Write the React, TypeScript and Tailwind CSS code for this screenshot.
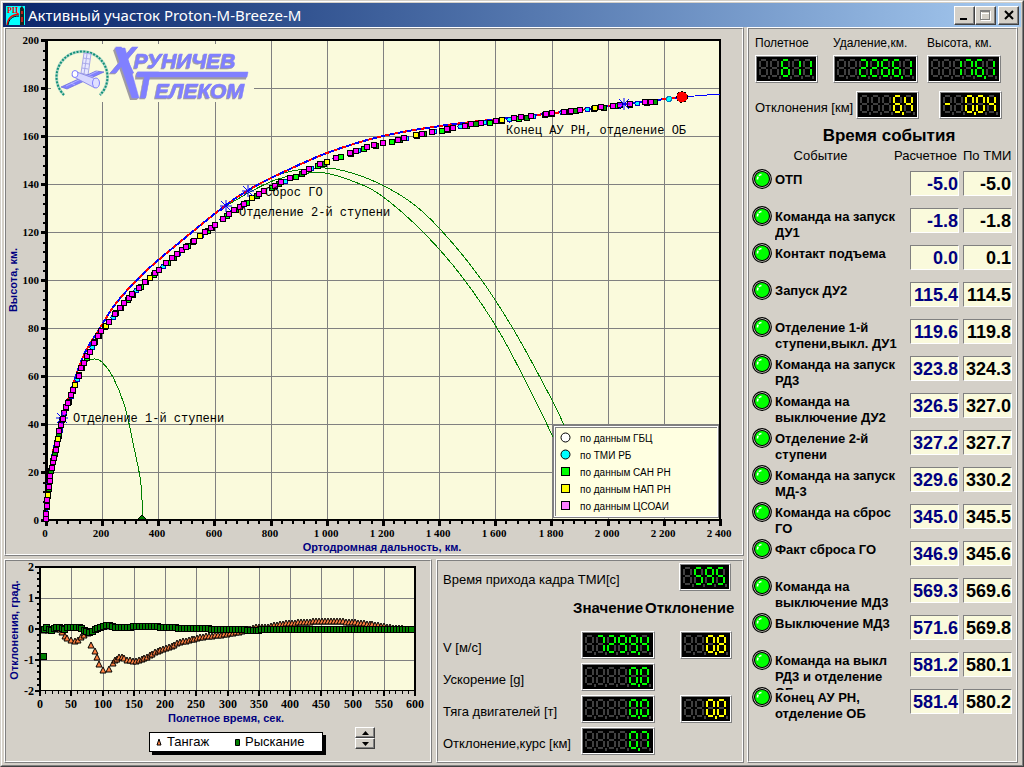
import type { ReactNode } from 'react'

type Point = [number, number]

interface FlightEvent {
  name: string
  planned: string
  actual: string
}

const EVENTS: FlightEvent[] = [
  { name: 'ОТП', planned: '-5.0', actual: '-5.0' },
  { name: 'Команда на запуск\nДУ1', planned: '-1.8', actual: '-1.8' },
  { name: 'Контакт подъема', planned: '0.0', actual: '0.1' },
  { name: 'Запуск ДУ2', planned: '115.4', actual: '114.5' },
  { name: 'Отделение 1-й\nступени,выкл. ДУ1', planned: '119.6', actual: '119.8' },
  { name: 'Команда на запуск\nРД3', planned: '323.8', actual: '324.3' },
  { name: 'Команда на\nвыключение ДУ2', planned: '326.5', actual: '327.0' },
  { name: 'Отделение 2-й\nступени', planned: '327.2', actual: '327.7' },
  { name: 'Команда на запуск\nМД-3', planned: '329.6', actual: '330.2' },
  { name: 'Команда на сброс\nГО', planned: '345.0', actual: '345.5' },
  { name: 'Факт сброса ГО', planned: '346.9', actual: '345.6' },
  { name: 'Команда на\nвыключение МД3', planned: '569.3', actual: '569.6' },
  { name: 'Выключение МД3', planned: '571.6', actual: '569.8' },
  { name: 'Команда на выкл\nРД3 и отделение\nОБ', planned: '581.2', actual: '580.1' },
  { name: 'Конец АУ РН,\nотделение ОБ', planned: '581.4', actual: '580.2' },
]

const PARAMS = [
  { label: 'V [м/с]', value: ' 7299,4', delta: '  0,8' },
  { label: 'Ускорение [g]', value: '    0,0', delta: '' },
  { label: 'Тяга двигателей [т]', value: '    0,0', delta: '  0,0' },
  { label: 'Отклонение,курс [км]', value: '    0,7', delta: '' },
]

/* ---------- seven segment display ---------- */

const SEGMENTS: Record<string, [number, number, number, number]> = {
  a: [2, 0, 5, 2],
  b: [7, 2, 2, 6],
  c: [7, 10, 2, 6],
  d: [2, 16, 5, 2],
  e: [0, 10, 2, 6],
  f: [0, 2, 2, 6],
  g: [2, 8, 5, 2],
}

const DIGITS: Record<string, string> = {
  '0': 'abcdef', '1': 'bc', '2': 'abged', '3': 'abgcd', '4': 'fgbc',
  '5': 'afgcd', '6': 'afgcde', '7': 'abc', '8': 'abcdefg', '9': 'abcdfg',
  '-': 'g', ' ': '',
}

function Display({ value, color = '#00ff00' }: { value: string; color?: string }) {
  const cells: { char: string; dot: boolean }[] = []
  for (const char of value) {
    if (char === ',') cells[cells.length - 1].dot = true
    else cells.push({ char, dot: false })
  }
  const width = cells.length * 11 + 4
  return (
    <div className="w-fit border border-t-white border-l-white border-r-[#808080] border-b-[#808080]">
      <div className="border border-t-[#808080] border-l-[#808080] border-r-white border-b-white bg-black">
        <svg role="img" aria-label={value.trim()} className="block" width={width} height={24} shapeRendering="crispEdges">
          {cells.map((cell, i) => (
            <g key={i} transform={`translate(${i * 11 + 2} 2)`}>
              {Object.entries(SEGMENTS).map(([name, [x, y, w, h]]) => (
                <rect key={name} x={x} y={y} width={w} height={h} fill={DIGITS[cell.char].includes(name) ? color : '#404040'} />
              ))}
              <rect x={9} y={17} width={2} height={3} fill={cell.dot ? color : '#404040'} />
            </g>
          ))}
        </svg>
      </div>
    </div>
  )
}

/* ---------- shared pieces ---------- */

function Panel({ className = '', children }: { className?: string; children: ReactNode }) {
  return (
    <div className="flex min-w-0 border border-t-white border-l-white border-r-[#808080] border-b-[#808080]">
      <div className={`min-w-0 flex-1 border border-t-[#808080] border-l-[#808080] border-r-white border-b-white ${className}`}>
        {children}
      </div>
    </div>
  )
}

function Lamp() {
  return (
    <svg className="block" width={20} height={20} viewBox="0 0 20 20">
      <circle cx={10} cy={10} r={9.3} fill="#d4d0c8" stroke="#000" strokeWidth={1.2} />
      <path d="M4 15a8 8 0 0 1 11-11.2" fill="none" stroke="#fff" strokeWidth={1.4} />
      <circle cx={10} cy={10} r={7.5} fill="#00ff00" stroke="#000" strokeWidth={1.1} />
      <path d="M5.500 10.500a4.600 4.600 0 0 1 4-5" fill="none" stroke="#fff" strokeWidth={1.6} strokeDasharray="3 1" />
    </svg>
  )
}

// walks along a polyline and returns points a given distance apart
function walk(points: Point[], step: (i: number) => number): Point[] {
  const out: Point[] = []
  let left = 0
  for (let i = 1; i < points.length; i++) {
    const [x0, y0] = points[i - 1]
    const [x1, y1] = points[i]
    const len = Math.hypot(x1 - x0, y1 - y0)
    while (left < len) {
      const t = left / len
      out.push([Math.round(x0 + (x1 - x0) * t), Math.round(y0 + (y1 - y0) * t)])
      left += step(out.length)
    }
    left -= len
  }
  return out
}

// smooth path through the given points
function smooth(points: Point[]) {
  let d = `M${points[0][0]} ${points[0][1]}`
  for (let i = 0; i < points.length - 1; i++) {
    const p0 = points[i - 1] ?? points[i]
    const p1 = points[i]
    const p2 = points[i + 1]
    const p3 = points[i + 2] ?? p2
    d += `C${p1[0] + (p2[0] - p0[0]) / 6} ${p1[1] + (p2[1] - p0[1]) / 6} ${p2[0] - (p3[0] - p1[0]) / 6} ${p2[1] - (p3[1] - p1[1]) / 6} ${p2[0]} ${p2[1]}`
  }
  return d
}

const range = (n: number) => Array.from({ length: n }, (_, i) => i)

/* ---------- trajectory chart ---------- */

const NOMINAL: Point[] = [
  [46, 520], [48, 500], [53, 452], [67, 403], [83, 357], [100, 328], [117, 302], [145, 272], [180, 242],
  [226, 205], [247, 191], [271, 178], [327, 153], [383, 136], [440, 126], [480, 121], [527, 116],
  [580, 110], [624, 104], [682, 97],
]

const MEASURED: Point[] = [
  [46, 519], [47, 500], [51, 471], [57, 443], [62, 419], [70, 398], [83, 364], [95, 342], [102, 330], [115, 314],
  [130, 296], [150, 278], [180, 251], [212, 227], [230, 213], [262, 192], [282, 182], [303, 172], [328, 161],
  [363, 148], [388, 142], [425, 133], [478, 123], [487, 122], [517, 118], [563, 112], [593, 108], [623, 105], [655, 101],
]

const STAGE1: Point[] = [
  [82, 366], [88, 361], [95, 359], [102, 362], [113, 377], [125, 407], [133, 443], [140, 477], [142, 500], [142, 518],
]

const STAGE2: Point[] = [
  [226, 206], [250, 192], [275, 180], [300, 174], [325, 173], [355, 182], [382, 196], [425, 234], [463, 278],
  [500, 333], [535, 400], [553, 437],
]

const FAIRING: Point[] = [
  [248, 191], [275, 176], [298, 170], [325, 168], [345, 171], [378, 183], [412, 203], [440, 229], [478, 275],
  [515, 332], [552, 400], [564, 425],
]

const CALLOUTS = [
  { star: [62, 418], text: 'Отделение 1-й ступени', x: 73, y: 422 },
  { star: [226, 206], text: 'Отделение 2-й ступени', x: 239, y: 216 },
  { star: [248, 191], text: 'Сброс ГО', x: 265, y: 196 },
  { star: [624, 104], text: 'Конец АУ РН, отделение ОБ', x: 506, y: 134 },
]

const SOURCES = [
  { name: 'по данным ГБЦ', color: '#ffffff', round: true },
  { name: 'по ТМИ РБ', color: '#00ffff', round: true },
  { name: 'по данным САН РН', color: '#00ff00', round: false },
  { name: 'по данным НАП РН', color: '#ffff00', round: false },
  { name: 'по данным ЦСОАИ', color: '#ff80ff', round: false },
]

function Logo() {
  return (
    <g>
      <rect x={51} y={44} width={203} height={58} fill="#fafadc" />
      <g shapeRendering="auto">
        <path d="M64 95A25.500 25.500 0 1 1 100 95" fill="none" stroke="#b0d8c8" strokeWidth={3} />
        <path d="M64 95A25.500 25.500 0 1 1 100 95" fill="none" stroke="#109078" strokeWidth={2} strokeDasharray="2 1.4" />
        {/* orbital station */}
        <path d="M84 53l7 1-3 21-7-2z" fill="#e8e8ff" stroke="#a8a8e8" />
        <path d="M83 58l7 1M82 63l7 1M82 68l6 1M87 54l-3 20" stroke="#a8a8e8" />
        <path d="M61 87l35-16 8 1-37 17z" fill="#8080ff" stroke="#6868d8" strokeWidth={0.7} />
        <path d="M66 86l32-15M71 83l4 2M89 76l4 1" stroke="#c8c8ff" strokeWidth={0.7} />
        <path d="M74 71l22 8-1 9-23-12z" fill="#d8d8ff" stroke="#9090e8" />
        <ellipse cx={75} cy={74} rx={3} ry={3.5} fill="#fff" stroke="#8080ff" />
        <ellipse cx={96} cy={83} rx={3.5} ry={5} fill="#e0e0ff" stroke="#8080ff" />
      </g>
      {/* grey shadow shapes under the lettering */}
      <g fill="#a09ca0" shapeRendering="auto">
        <path d="M113 50h10l14 50h-7z" />
        <path d="M136 73.500h111l-1 6h-111z" />
      </g>
      <g
        fill="#8080ff"
        stroke="#8080ff"
        strokeWidth={0.5}
        shapeRendering="auto"
        className="font-['Liberation_Sans'] font-bold italic [filter:drop-shadow(-1px_1px_0_#a09ca0)]"
      >
        <text x={112} y={73} fontSize={36}>Х</text>
        <path d="M115 48h10l14 50h-7z" />
        <text x={134} y={68} fontSize={21}>РУНИЧЕВ</text>
        <path d="M138 72h110l-1 5h-110z" />
        <text x={134} y={98} fontSize={36}>Т</text>
        <text x={155} y={98} fontSize={21}>ЕЛЕКОМ</text>
      </g>
    </g>
  )
}

function TrajectoryChart() {
  const gx = (i: number) => Math.round(46 + i * 56.17)
  const gy = (i: number) => 520 - i * 48
  const under = walk(MEASURED, i => (i < 50 ? 5 + (i % 3) : [8, 6, 12, 7, 10][i % 5]))
  const over = walk(MEASURED, i => (i < 22 ? [6, 5, 8][i % 3] : i < 60 ? [6, 7, 5, 10, 8][i % 5] : [6, 12, 7, 10, 15][i % 5]))
  return (
    <svg className="block w-full h-auto" viewBox="6 29 736 525" shapeRendering="crispEdges">
      <rect x={46} y={40} width={674} height={480} fill="#fafadc" />
      {range(11).map(i => <rect key={i} x={gx(i + 1)} y={40} width={1} height={480} fill="#808080" />)}
      {range(9).map(i => <rect key={i} x={46} y={gy(i + 1)} width={674} height={1} fill="#808080" />)}
      <Logo />

      {/* axes */}
      <rect x={45} y={39} width={676} height={2} fill="#000" />
      <rect x={719} y={40} width={2} height={480} fill="#000" />
      <rect x={45} y={40} width={3} height={481} fill="#000" />
      <rect x={45} y={519} width={676} height={2} fill="#000" />
      {range(51).map(i => (
        <rect key={i} x={i % 5 ? 43 : 41} y={Math.round(520 - i * 9.6) - (i % 5 ? 0 : 1)} width={i % 5 ? 3 : 7} height={i % 5 ? 2 : 3} fill="#000" />
      ))}
      {range(61).map(i => (
        <rect key={i} x={Math.round(46 + i * 11.23) - 1} y={i % 5 ? 521 : 519} width={i % 5 ? 2 : 3} height={i % 5 ? 3 : 7} fill="#000" />
      ))}
      <g className="font-['Liberation_Serif'] font-bold" fontSize={11}>
        {range(11).map(i => <text key={i} x={39} y={gy(i) + 4} textAnchor="end">{i * 20}</text>)}
        {range(13).map(i => (
          <text key={i} x={gx(i) - 1} y={537} textAnchor="middle">
            {i < 5 ? i * 200 : `${Math.floor(i / 5)} ${String((i * 200) % 1000).padStart(3, '0')}`}
          </text>
        ))}
      </g>
      <g className="font-['Liberation_Sans'] font-bold" fontSize={11} fill="#000080">
        <text x={382} y={551} textAnchor="middle">Ортодромная дальность, км.</text>
        <text x={0} y={0} transform="translate(17 280) rotate(-90)" textAnchor="middle">Высота, км.</text>
      </g>

      {/* ballistic falls */}
      <g fill="none" stroke="#008000">
        <path d={smooth(STAGE1)} />
        <path d={smooth(STAGE2)} />
        <path d={smooth(FAIRING)} />
      </g>
      <path d="M142 515l4 4h-8z" fill="#008000" stroke="#000" />

      {/* nominal trajectory */}
      <path d={smooth(NOMINAL)} fill="none" stroke="#ff0000" strokeWidth={2} />
      <path d={smooth(NOMINAL)} fill="none" stroke="#0000ff" strokeWidth={2} strokeDasharray="5 4" />
      <path d="M682 97L720 94" stroke="#0000ff" />

      {/* measured points */}
      {under.map(([x, y], i) =>
        i % 3 === 0
          ? <circle key={i} cx={x + 0.5} cy={y + 0.5} r={2.5} fill="#00ffff" stroke="#0000c0" />
          : <rect key={i} x={x - 2.5} y={y - 1.5} width={5} height={5} fill={i % 3 === 1 ? '#00ff00' : '#00a000'} stroke="#000" />
      )}
      {over.map(([x, y], i) => (
        <rect key={i} x={x - 2.5} y={y - 2.5} width={5} height={5} fill={i % 9 === 4 ? '#ffff00' : '#ff00ff'} stroke="#000" />
      ))}
      <circle cx={669} cy={99} r={2.5} fill="#00ffff" stroke="#0080c0" />

      {CALLOUTS.map(({ star: [x, y], text, x: tx, y: ty }) => (
        <g key={text}>
          <path
            transform={`translate(${x} ${y})`}
            d="M-6 0H6M0 -6V6M-5 -5L5 5M-5 5L5 -5"
            stroke="#0000ff"
            shapeRendering="auto"
          />
          <text x={tx} y={ty} fontSize={12} className="font-['Liberation_Mono']">{text}</text>
        </g>
      ))}
      <rect x={60} y={416} width={5} height={5} fill="#ff00ff" stroke="#000" />
      <circle cx={682} cy={97} r={5.5} fill="#ff0000" stroke="#000" strokeDasharray="2 2" />

      {/* legend */}
      <rect x={553} y={425} width={166} height={93} fill="#808080" />
      <rect x={554} y={426} width={164} height={91} fill="#fff" />
      <rect x={555} y={427} width={162} height={89} fill="#808080" />
      <rect x={556} y={428} width={161} height={88} fill="#ffffe1" />
      {SOURCES.map((s, i) => (
        <g key={s.name}>
          {s.round
            ? <circle cx={565.5} cy={437.5 + i * 17} r={4.5} fill={s.color} stroke="#000" shapeRendering="auto" />
            : <rect x={561.5} y={433.5 + i * 17} width={8} height={8} fill={s.color} stroke="#000" />}
          <text x={580} y={442 + i * 17} fontSize={10} className="font-['Liberation_Sans']">{s.name}</text>
        </g>
      ))}
    </svg>
  )
}

/* ---------- deviation chart ---------- */

const PITCH: Point[] = [
  [44, 630], [53, 629], [60, 629], [64, 635], [68, 639], [72, 641], [77, 641], [81, 637], [85, 634], [89, 633],
]

const PITCH_STAGE2: Point[] = [
  [91, 645], [94, 650], [97, 656], [99, 664], [102, 669], [105, 671], [108, 670], [111, 665], [115, 660],
  [121, 656], [127, 660], [133, 661], [140, 660], [150, 655], [160, 650], [170, 647], [180, 642], [193, 639],
  [207, 636], [220, 635], [233, 633], [243, 631], [255, 627], [267, 627], [280, 624], [300, 622], [320, 621],
  [337, 621], [353, 622], [370, 624], [383, 626], [393, 628], [413, 629],
]

const YAW: Point[] = [
  [44, 629], [47, 627], [50, 630], [53, 629], [57, 626], [60, 627], [63, 629], [68, 627], [80, 627], [85, 631],
  [89, 632], [93, 630], [100, 627], [107, 625], [115, 627], [127, 627], [133, 626], [147, 626], [167, 627],
  [187, 628], [233, 629], [256, 630], [262, 629], [277, 629], [413, 629],
]

function DeviationChart() {
  const gx = (i: number) => Math.round(40 + i * 31.25)
  const gy = (i: number) => Math.round(567 + i * 31)
  const pitch = [...walk(PITCH, () => 4), ...walk(PITCH_STAGE2, i => (i < 7 ? 7 : 3))]
  return (
    <svg className="block w-full h-auto" viewBox="6 561 424 165" shapeRendering="crispEdges">
      <rect x={40} y={567} width={375} height={124} fill="#fafadc" />
      {range(11).map(i => <rect key={i} x={gx(i + 1)} y={567} width={1} height={124} fill="#808080" />)}
      {range(3).map(i => <rect key={i} x={40} y={gy(i + 1)} width={375} height={1} fill="#808080" />)}
      <rect x={39} y={566} width={377} height={2} fill="#000" />
      <rect x={414} y={567} width={2} height={124} fill="#000" />
      <rect x={39} y={566} width={2} height={126} fill="#000" />
      <rect x={39} y={690} width={377} height={1} fill="#000" />
      {range(21).map(i => (
        <rect key={i} x={i % 5 ? 37 : 35} y={Math.round(566 + i * 6.2)} width={i % 5 ? 3 : 5} height={2} fill="#000" />
      ))}
      {range(61).map(i => (
        <rect key={i} x={Math.round(39 + i * 6.25)} y={691} width={i % 5 ? 1 : 2} height={i % 5 ? 3 : 5} fill="#000" />
      ))}
      <g className="font-['Liberation_Serif'] font-bold" fontSize={12}>
        {range(5).map(i => <text key={i} x={34} y={gy(i) + 4} textAnchor="end">{2 - i}</text>)}
        {range(13).map(i => <text key={i} x={gx(i)} y={708} textAnchor="middle">{i * 50}</text>)}
      </g>
      <g className="font-['Liberation_Sans'] font-bold" fontSize={11} fill="#000080">
        <text x={226} y={722} textAnchor="middle">Полетное время, сек.</text>
        <text x={0} y={0} transform="translate(18 630) rotate(-90)" textAnchor="middle">Отклонения, град.</text>
      </g>
      {pitch.map(([x, y], i) => (
        <path key={i} transform={`translate(${x} ${y})`} d="M0 -3L3 3H-3z" fill="#ff8040" stroke="#000" shapeRendering="auto" />
      ))}
      {walk(YAW, () => 3).map(([x, y], i) => (
        <rect key={i} x={x - 2.5} y={y - 2.5} width={6} height={6} fill="#008000" stroke="#000" />
      ))}
      <rect x={40.5} y={653.5} width={6} height={6} fill="#008000" stroke="#000" />
    </svg>
  )
}

/* ---------- window ---------- */

const BUTTON =
  'flex items-center justify-center bg-[#d4d0c8] border border-t-white border-l-white border-r-[#404040] border-b-[#404040] shadow-[inset_-1px_-1px_0_#808080]'

function TitleBar() {
  return (
    <header className="flex h-6 items-center bg-linear-to-r from-[#0a246a] to-[#a6caf0] pl-[3px] pr-[2px]">
      <svg width={19} height={19} viewBox="0 0 19 19" className="shrink-0">
        <rect width={19} height={19} fill="#00ffff" />
        <text x={1} y={7} fontSize={8} fill="#ff0000" className="font-['Liberation_Serif'] font-bold">РЦ</text>
        <path d="M1 19c1-7 4-10 12-11" fill="none" stroke="#ff0000" strokeWidth={1.4} />
        <path d="M2 19c1-6 4-9 11-9" fill="none" stroke="#000" />
        <path d="M14 2l2-2 2 3v16h-4z" fill="#202020" />
        <path d="M15 5h2v3h-2zM15 11h2v5h-2z" fill="#c02020" />
      </svg>
      <h1 className="ml-[3px] flex-1 truncate font-['Noto_Sans'] text-[15px] leading-6 text-white">
        Активный участок Proton-M-Breeze-M
      </h1>
      <button type="button" aria-label="Свернуть" className={`${BUTTON} h-[19px] w-[21px]`}>
        <svg width={13} height={12} shapeRendering="crispEdges"><rect x={2} y={9} width={7} height={2} /></svg>
      </button>
      <button type="button" aria-label="Развернуть" disabled className={`${BUTTON} h-[19px] w-[21px]`}>
        <svg width={13} height={12} shapeRendering="crispEdges" fill="none">
          <path d="M2.500 2.500h9v9h-9zM2 4h10" stroke="#fff" />
          <path d="M1.500 1.500h9v9h-9zM1 2.500h10" stroke="#808080" />
        </svg>
      </button>
      <button type="button" aria-label="Закрыть" className={`${BUTTON} ml-[2px] h-[19px] w-[21px]`}>
        <svg width={12} height={12} viewBox="0 0 12 12"><path d="M2 2l8 8M10 2l-8 8" stroke="#000" strokeWidth={2} /></svg>
      </button>
    </header>
  )
}

function ParamsPanel() {
  return (
    <Panel className="pl-[5px] pt-[2px] text-[13px] leading-4">
      <div className="flex items-center">
        <span className="w-[236px] pt-[5px]">Время прихода кадра ТМИ[с]</span>
        <Display value=" 595" />
      </div>
      <table className="w-full table-fixed border-collapse text-left">
        <thead>
          <tr className="h-[38px] align-top text-[15px] leading-5">
            <td className="w-[130px]" />
            <th className="w-[72px] whitespace-nowrap pt-[7px] font-bold">Значение</th>
            <th className="whitespace-nowrap pt-[7px] font-bold">Отклонение</th>
          </tr>
        </thead>
        <tbody>
          {PARAMS.map(p => (
            <tr key={p.label} className="h-8">
              <th scope="row" className="whitespace-nowrap pt-[5px] font-normal">{p.label}</th>
              <td className="pl-2"><Display value={p.value} /></td>
              <td className="pl-[35px]">{p.delta && <Display value={p.delta} color="#ffff00" />}</td>
            </tr>
          ))}
        </tbody>
      </table>
    </Panel>
  )
}

function DeviationPanel() {
  return (
    <Panel>
      <DeviationChart />
      <div className="flex items-start pl-[143px] text-[13px]">
        <div className="mt-[6px] flex h-5 w-[174px] items-center border border-black bg-white pl-[6px] shadow-[3px_3px_0_#000]">
          <svg width={7} height={8} className="mr-1"><path d="M3 1l2 6H1z" fill="#ff8040" stroke="#000" /></svg>
          <span className="w-[68px]">Тангаж</span>
          <svg width={5} height={7} className="mr-[5px]"><path d="M.5.5h4v6h-4z" fill="#008000" stroke="#000" /></svg>
          <span>Рыскание</span>
        </div>
        <div className="ml-8 mt-[1px] flex flex-col">
          <button type="button" aria-label="Больше" className={`${BUTTON} h-[11px] w-5`}>
            <svg width={7} height={4}><path d="M0 4l3.500-4L7 4z" /></svg>
          </button>
          <button type="button" aria-label="Меньше" className={`${BUTTON} h-[11px] w-5`}>
            <svg width={7} height={4}><path d="M0 0h7L3.500 4z" /></svg>
          </button>
        </div>
      </div>
    </Panel>
  )
}

const VALUE_BOX =
  'mt-[2px] h-[25px] w-[49px] border border-t-[#808080] border-l-[#808080] border-r-white border-b-white bg-[#fafadc] text-right text-[18px] leading-6 font-bold'

function EventsPanel() {
  return (
    <Panel className="pl-[3px] pt-[6px]">
      <div className="grid grid-cols-[78px_94px_1fr] pl-[3px] text-[12px] leading-4">
        {[
          ['Полетное', '  611'],
          ['Удаление,км.', '  2266,1'],
          ['Высота, км.', '  176,1'],
        ].map(([label, value]) => (
          <div key={label}>
            <div className="mb-1">{label}</div>
            <Display value={value} />
          </div>
        ))}
      </div>
      <div className="mt-2 flex items-center pl-[3px] text-[13px]">
        <span className="w-[101px] whitespace-nowrap pt-[5px]">Отклонения [км]</span>
        <Display value="   6,4" color="#ffff00" />
        <div className="ml-5"><Display value="- 0,04" color="#ffff00" /></div>
      </div>
      <h2 className="mt-[7px] pl-[10px] text-center text-[17px] leading-5 font-bold">Время события</h2>
      <table className="w-full table-fixed border-collapse">
        <thead>
          <tr className="h-[23px] align-top text-[13px] leading-5">
            <td className="w-[23px]" />
            <th className="pr-[44px] font-normal">Событие</th>
            <th className="w-[53px]"><div className="flex justify-end whitespace-nowrap pr-[6px] font-normal">Расчетное</div></th>
            <th className="w-[53px] whitespace-nowrap text-left font-normal">По ТМИ</th>
          </tr>
        </thead>
        <tbody>
          {EVENTS.map(e => (
            <tr key={e.name} className="h-[37px] align-top">
              <td className="p-0"><Lamp /></td>
              <td className="p-0">
                <div className="h-[34px]">
                  <div className="h-10 overflow-hidden whitespace-pre pt-[3px] text-[13px] leading-4 font-bold">{e.name}</div>
                </div>
              </td>
              <td className="p-0"><div className={`${VALUE_BOX} text-[#000080]`}>{e.planned}</div></td>
              <td className="p-0"><div className={VALUE_BOX}>{e.actual}</div></td>
            </tr>
          ))}
        </tbody>
      </table>
    </Panel>
  )
}

export default function App() {
  return (
    <div className="flex min-h-screen flex-col border border-t-[#d4d0c8] border-l-[#d4d0c8] border-r-[#404040] border-b-[#404040] bg-[#d4d0c8] font-['Liberation_Sans',sans-serif] text-black">
      <div className="flex flex-1 flex-col border border-t-white border-l-white border-r-[#808080] border-b-[#808080] p-px">
        <TitleBar />
        <main className="grid flex-1 grid-cols-[1fr_271px] gap-[3px] pl-px pr-[3px] pb-px">
          <div className="flex min-w-0 flex-col gap-[3px]">
            <Panel><TrajectoryChart /></Panel>
            <div className="grid flex-1 grid-cols-[1fr_308px] gap-1">
              <DeviationPanel />
              <ParamsPanel />
            </div>
          </div>
          <EventsPanel />
        </main>
      </div>
    </div>
  )
}
